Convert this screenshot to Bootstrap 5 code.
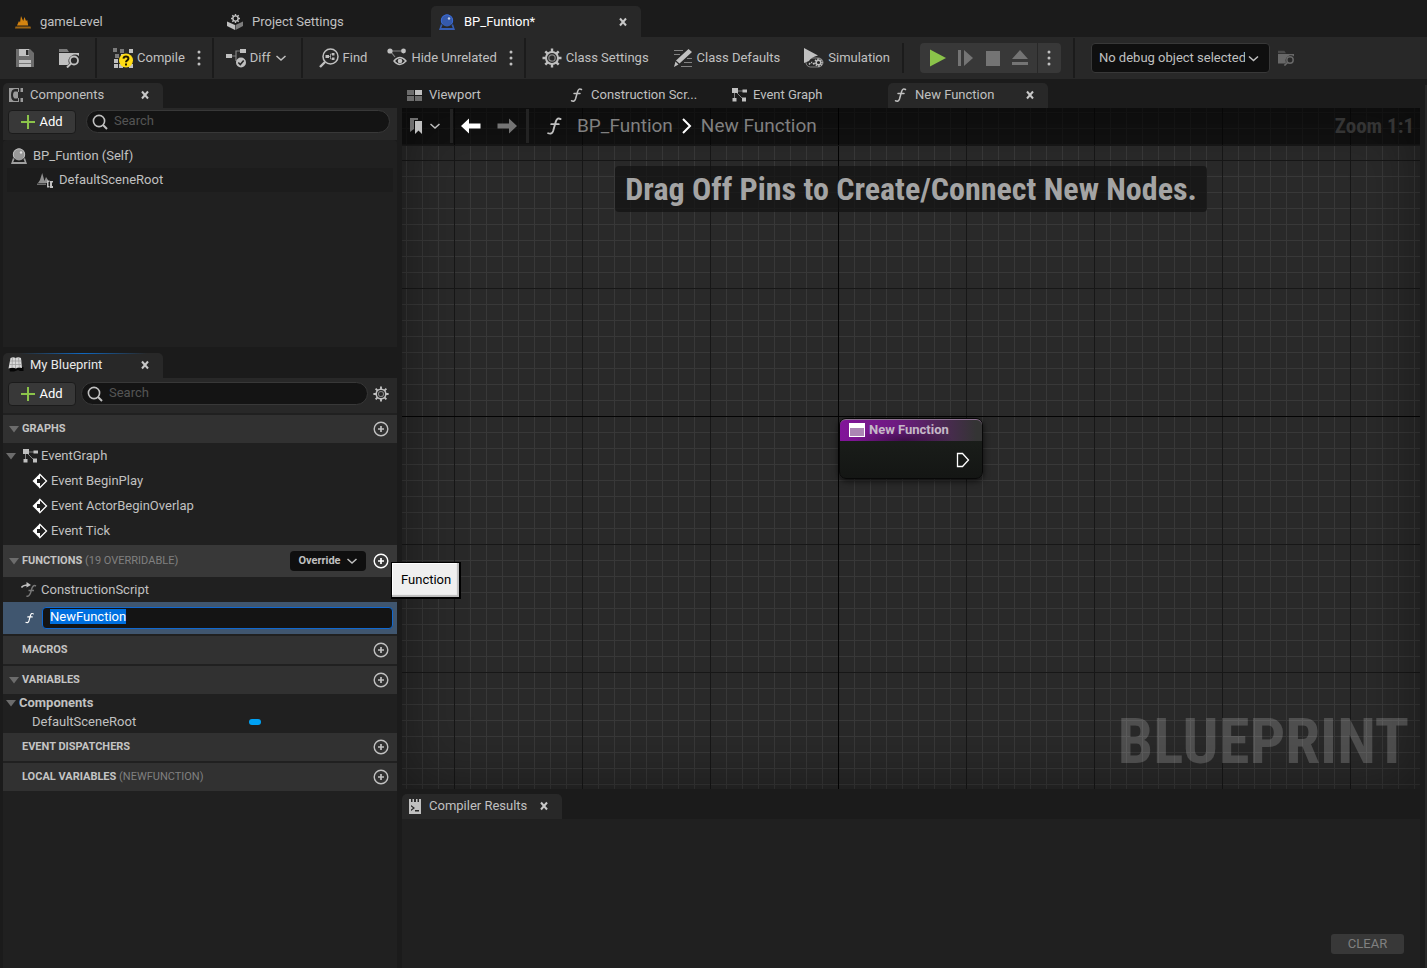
<!DOCTYPE html>
<html lang="en" data-bs-theme="dark">
<head>
<meta charset="utf-8">
<meta name="viewport" content="width=device-width, initial-scale=1">
<title>BP_Funtion - Blueprint Editor</title>
<link href="https://cdn.jsdelivr.net/npm/bootstrap@5.3.0/dist/css/bootstrap.min.css" rel="stylesheet">
<style>
:root{--ed-bg:#1b1b1b;--ed-panel:#202020;--ed-bar:#282828;--ed-head:#313131;--ed-text:#c0c0c0;--ed-field:#141414}
body{font-family:Roboto,"Noto Sans",sans-serif;font-size:13px;line-height:16px;color:var(--ed-text);background:var(--ed-bg)}
button,input,select{font:inherit;color:inherit}
button{background:none;border:0;padding:0}
a{color:inherit;text-decoration:none}
svg{flex:none;display:block;fill:currentColor}
.i20{width:20px;height:20px}.i16{width:16px;height:16px}.i12{width:12px;height:12px}
.ln{fill:none;stroke:currentColor}
.narrow-face{font-family:"Roboto Condensed","Liberation Sans Narrow",Roboto,sans-serif;font-weight:700}

.app-tabs{height:37px;padding-left:7px;gap:2px}
.app-tab{width:210px;height:31px;padding:0 12px 0 8px;gap:9px;border-radius:5px 5px 0 0}
.app-tab.current{background:var(--ed-bar);color:#fff}
.close-x{width:12px;height:12px;color:#c8c8c8}

.tools{height:42px;padding-left:3px;background:var(--ed-bar)}
.tool{padding:0 12px;gap:4px;height:100%}
.tool-tight{padding-left:8px}
.tool-drop{padding-right:10px}
.dots{width:8px;margin:0 5px 0 -2px}
.sep{width:2px;height:40px;margin:0 4px;background:var(--ed-bg)}
.sep-short{height:30px;margin:0 16px 0 0}
.sep-wide{margin:0 16px 0 12px}
.play{height:30px;width:141px;background:#383838;border-radius:4px;padding-left:8px}
.play button{width:28px;height:30px;padding-left:1px}
.play .more{width:24px;height:30px;border-left:1px solid #282828;padding-left:7px;margin-left:auto}
.debug-pick{flex:none;width:179px;height:30px;padding:0 24px 0 7px;font-size:13px;line-height:16px;border:1px solid #383838;border-radius:4px;color:var(--ed-text);background-color:#0f0f0f;background-position:right 10px center;background-size:11px 11px;background-image:url("data:image/svg+xml,%3Csvg xmlns='http://www.w3.org/2000/svg' viewBox='0 0 11 11'%3E%3Cpath d='M1 3.5l4.5 4 4.5-4' fill='none' stroke='%23c0c0c0' stroke-width='1.5'/%3E%3C/svg%3E")}
.dim{color:#686868}

.work{gap:5px;padding:4px 7px 0 3px}
.side{flex:0 0 394px}
.dock-tabs{gap:2px}
.dock-tab{width:160px;height:25px;padding:0 12px 2px 5px;gap:6px;border-radius:5px 5px 0 0}
.dock-tab.current{background:var(--ed-bar)}
.dock-tab.active-dock{margin-top:6px;color:#e8e8e8;background:linear-gradient(90deg,transparent 10%,#1068c0 50%,transparent 90%) top/100% 1px no-repeat,var(--ed-bar)}
.side-bar{height:32px;background:var(--ed-bar);padding:2px 7px 0 5px;gap:10px}
.side-bar.with-gear{height:35px;padding-top:4px;padding-right:8px;gap:5px}
.add-btn{width:68px;height:24px;background:#383838;border:1px solid #1b1b1b;border-radius:4px;color:#fff;gap:4px}
.search{height:23px;border:1px solid #383838;border-radius:12px;background:var(--ed-field);padding:0 5px;gap:6px}
.search input{background:none;border:0;outline:0;padding:0 0 1px;min-width:0}
.search input::placeholder{color:#545454;opacity:1}
.comp-tree{background:var(--ed-panel);height:207px;padding:4px 4px 0;border-radius:4px 4px 0 0}
.comp-tree li{height:24px;gap:6px;padding-left:4px}
.comp-tree .child{background:#1c1c1c;padding-left:30px}

.bp-body{background:var(--ed-panel)}
.sect{height:28px;margin-top:2px;background:var(--ed-head);padding:0 8px 0 5px;font-size:11px;font-weight:700}
.sect h2{font-size:11px;line-height:16px;font-weight:700;margin:0;color:#c4c4c4}
.sect h2 span{font-weight:400;color:#808080}
.sect h2.leafless{padding-left:14px}
.tri{width:12px;height:12px;color:#6c6c6c;margin-right:2px}
.tri-in{margin-left:2px}
.sect-hot{height:32px;background:#383838}
.override{width:76px;height:20px;margin-right:7px;background:#0f0f0f;border-radius:4px;gap:5px}
.tip{left:calc(100% - 6px);top:17px;z-index:5;padding:10px 9px;width:70px;height:37px;line-height:14px;font-weight:400;font-size:13px;color:#000;white-space:nowrap;background:#efefef;border:2px solid #000;border-top-width:1px;border-left-width:1px;box-shadow:inset -2px -2px 1px #bbb,inset 1px 1px 0 #fff}
.bp-list li{height:25px}
.graph-row .i16{margin:0 3px}
.ev{padding-left:29px;gap:3px}
.fn-row{padding-left:18px}
.bp-list .fn-edit{height:32px;background:#40566f;padding:0 4px 0 21px;gap:6px;color:#fff}
.fn-edit input{height:22px;background:#141414;border:1px solid #1068d0;border-radius:4px;padding:0 7px 3px;outline:0;min-width:0}
.fn-edit input::selection{background:#0070e0;color:#fff}
.var-pill{width:12px;height:6px;border-radius:3px;background:#00a2f5;margin-left:113px}
.bp-vars{padding-bottom:2px}
.bp-vars li{height:18px}
.bp-vars .var-row{padding-left:29px;height:19px}

.graph{background-color:#292929;background-image:
 linear-gradient(#030303,#030303),linear-gradient(#030303,#030303),
 linear-gradient(90deg,#171717 1px,transparent 1px),linear-gradient(#171717 1px,transparent 1px),
 linear-gradient(90deg,#383838 1px,transparent 1px),linear-gradient(#383838 1px,transparent 1px);
 background-size:1px 100%,100% 1px,128px 128px,128px 128px,16px 16px,16px 16px;
 background-position:436px 0,0 308px,52px 52px,52px 52px,4px 4px,4px 4px;
 background-repeat:no-repeat,no-repeat,repeat,repeat,repeat,repeat}
.shade{inset:0;box-shadow:inset 0 0 60px rgba(0,0,0,.42);pointer-events:none}
.graph-head{height:38px;background:rgba(0,0,0,.58);border-bottom:1px solid #161616;padding:0 6px 2px 8px}
.graph-head .bar{width:3px;height:34px;margin:0 8px 0 9px;background:#232323}
.crumbs{font-size:19px;line-height:24px;color:#808080;gap:8px}
.zoom-note{font-size:21px;line-height:24px;color:#343434}
.hint{margin-top:20px;height:46px;padding:0 10px;background:rgba(18,18,18,.72);border-radius:4px;color:#a4a4a4;font-size:32px;line-height:46px}
.mark-note{right:11px;bottom:11px;font-size:63px;line-height:72px;color:rgba(255,255,255,.18)}
.fn-node{left:437px;top:310px;width:144px;height:61px;border:1px solid #080808;border-radius:7px;background:linear-gradient(#1d211d,#141614);box-shadow:0 2px 6px rgba(0,0,0,.7)}
.fn-node header{height:22px;border-radius:6px 6px 0 0;gap:4px;padding:0 0 1px 9px;font-weight:700;color:#c4b8c6;border-top:1px solid #8c7090;background:radial-gradient(ellipse at 45% 100%,rgba(20,0,25,.5),transparent 45%),linear-gradient(90deg,#82149a,#6d1b80 40%,#343434 96%)}
.fn-node .pin{margin:11px 12px 0 auto;color:#fff}
.results-tab{margin-top:5px}
.results{height:149px;background:var(--ed-panel);padding:0 16px 14px 0}
.clear-btn{width:73px;height:20px;border-radius:3px;background:#383838;color:#808080}
.edge{right:0;top:85px;bottom:0;width:2px;background:#282828}
</style>
</head>
<body>
<svg class="d-none" aria-hidden="true">
 <symbol id="x" viewBox="0 0 12 12"><path class="ln" stroke-width="2" d="M3 2.500l6 7M9 2.500l-6 7"/></symbol>
 <symbol id="chev" viewBox="0 0 12 12"><path class="ln" stroke-width="1.500" d="M1.500 4L6 8l4.500-4"/></symbol>
 <symbol id="dots" viewBox="0 0 8 20"><circle cx="4" cy="4" r="1.500"/><circle cx="4" cy="10" r="1.500"/><circle cx="4" cy="16" r="1.500"/></symbol>
 <symbol id="level" viewBox="0 0 16 16"><path d="M2 11.500L4 7l1 1.500L6 2l2.200 5 1.300-4 1.500 4 1.200-1 1 5.500z"/><path d="M.5 12.500h15l.5 2H0z" opacity=".7"/></symbol>
 <symbol id="actor" viewBox="0 0 16 16"><path d="M2 10l-2 6h16l-2-6-1.500 1 1.200 3H2.300l1.200-3z" opacity=".8"/><circle cx="8" cy="6.500" r="6" opacity=".75"/><path class="ln" stroke-width="1" d="M3.500 10a5.700 5.700 0 1 1 9 0"/><circle cx="10" cy="4.500" r="1.200" fill="#fff" opacity=".7"/></symbol>
 <symbol id="settingsbox" viewBox="0 0 16 16"><path d="M0 7.500L8 11v5l-8-4z"/><path d="M16 7.500L8.500 11v5L16 12z" opacity=".6"/><circle class="ln" cx="8.500" cy="4.500" r="2.600" stroke-width="1.400"/><path class="ln" stroke-width="1.400" d="M8.500 0v2M8.500 7v2M4 4.500h2M11 4.500h2M5.300 1.300l1.300 1.300M11.700 1.300l-1.300 1.300M5.300 7.700l1.300-1.300M11.700 7.700l-1.300-1.300"/></symbol>
 <symbol id="save" viewBox="0 0 20 20"><path d="M1 1h14l4 4v14H1z" opacity=".45"/><path d="M4 1h10v7H4zM4 12h12v7H4z"/><path d="M11 2h2.500v5H11z" fill="#282828"/><path d="M4 15.500h12" stroke="#777" stroke-width="1"/></symbol>
 <symbol id="browse" viewBox="0 0 20 20"><path d="M0 1h8l2 3H0z" opacity=".55"/><path d="M0 5h20v3a6.500 6.500 0 0 0-10 7.500L8.500 17H0z"/><circle class="ln" cx="15" cy="12.500" r="4" stroke-width="1.800"/><path class="ln" stroke-width="2" d="M12 15.500l-4 4"/></symbol>
 <symbol id="compile" viewBox="0 0 20 20"><path opacity=".55" d="M0 0h4v4H0zM7 1h4v4H7zM2 6h4v4H2z"/><path d="M16 1h4v4h-4zM1 11h4v4H1zM1 16h4v4H1zM8 6h4v4H8zM16 16h4v4h-4zM6 16h4v4H6z"/><circle cx="13" cy="12.500" r="7" fill="#ffdc14"/><path fill="none" stroke="#201800" stroke-width="2" d="M10.500 10.700q.2-2.200 2.500-2.200 2.400 0 2.400 2 0 1-1.200 1.800-1.200.7-1.200 2M13 15.500v2"/></symbol>
 <symbol id="diff" viewBox="0 0 20 20"><path class="ln" stroke-width="1.200" opacity=".6" d="M5 8h5M10 13V3h5"/><path d="M0 6h6v4H0zM14 1h6v4h-6z"/><circle cx="15" cy="14.500" r="5"/><path fill="none" stroke="#282828" stroke-width="1.600" d="M12.300 14.500l2 2 3.400-4"/></symbol>
 <symbol id="find" viewBox="0 0 20 20"><circle class="ln" cx="11.500" cy="8.500" r="7.500" stroke-width="1.500"/><path class="ln" stroke-width="2.400" d="M6 14l-5 5"/><path d="M6.500 7h3.500v3H6.500zM13 5h2.500v2.500H13zM13 9.500h2.500V12H13z"/><path class="ln" opacity=".7" d="M10 8.500h1.500M13 6h-1.500v5H13"/></symbol>
 <symbol id="hide" viewBox="0 0 20 20"><path class="ln" stroke-width="1.200" opacity=".6" d="M4 3h12M4 4l4 5"/><circle cx="3" cy="3" r="2.600"/><circle cx="16.500" cy="3" r="2.400"/><path class="ln" stroke-width="1.400" d="M7 13q5.800-7 12 0-6.200 7-12 0z"/><circle cx="13" cy="13" r="2.300"/></symbol>
 <symbol id="gear" viewBox="0 0 20 20"><circle class="ln" cx="10" cy="10" r="6" stroke-width="2"/><circle class="ln" cx="10" cy="10" r="3.200" stroke-width="1.300" opacity=".6"/><path class="ln" stroke-width="2.400" d="M10 .5V4M10 16v3.500M.5 10H4M16 10h3.500M3.300 3.300l2.400 2.400M14.300 14.300l2.400 2.400M3.300 16.700l2.400-2.400M14.300 5.700l2.400-2.400"/></symbol>
 <symbol id="defaults" viewBox="0 0 20 20"><path d="M15.500 1L19 4 6.500 15.500 3 12.500zM2.500 13.500L5.500 16.500 1 19z"/><path class="ln" opacity=".6" d="M1 2.500h9M1 6.500h6M14 10.500h5M11 14.500h8M8 18.500h11"/></symbol>
 <symbol id="simul" viewBox="0 0 20 20"><path d="M0 0l14 7.500Q7 9 5 13L0 15z"/><rect class="ln" x="2" y="10" width="17" height="9" rx="4.500" opacity=".6"/><circle class="ln" cx="14.500" cy="14.500" r="2.300" stroke-width="1.400"/><path class="ln" stroke-width="1.500" stroke-dasharray="1.500 1" d="M14.500 11a3.500 3.500 0 1 0 .1 0M5 16.500q3-4 5 0"/></symbol>
 <symbol id="f" viewBox="0 0 16 16"><path class="ln" stroke-width="1.500" stroke-linecap="round" d="M12.500 2.500q-2.600-1.600-3.800 1.800L6.500 12q-1 3-4 1.800M5 6.500h6"/></symbol>
 <symbol id="fover" viewBox="0 0 16 16"><path class="ln" stroke-width="1.600" d="M.5 5.500Q2 3 7 3"/><path d="M5.500 0L10 3 5.500 5.500z"/><path class="ln" stroke-width="1.500" opacity=".55" d="M15 4q-2.500-1.500-4 2l-1.500 5Q8 15 5.500 14M7.500 8.500H13"/></symbol>
 <symbol id="nodes" viewBox="0 0 16 16"><path class="ln" opacity=".6" d="M5 4h7M3.500 5v8M5 5l7 7"/><path d="M1 1h6v5H1zM11.500 2.500H16v3h-4.500zM1.500 11h4v3.500h-4zM11 10.500h4v4h-4z"/></symbol>
 <symbol id="views" viewBox="0 0 16 16"><path opacity=".5" d="M0 3h7v5H0zM0 9h7v5H0zM8 9h7v5H8z"/><path d="M8 3h7v5H8z"/></symbol>
 <symbol id="comp" viewBox="0 0 16 16"><path fill-rule="evenodd" opacity=".75" d="M1 1h14v4h-2.500v6H15v4H1zM11 1v4H9.500V4.500H6.500Q5 5 5 8t1.500 3.500h3V11H11v4h1.500V1zM3 8q0 6 4 6h3V2H7Q3 2 3 8z"/></symbol>
 <symbol id="root" viewBox="0 0 16 16"><path opacity=".7" d="M1 11L3 8l2.200-7L7.500 9 9 5l2 3v3z"/><path d="M0 11.500h9V13H0z" opacity=".5"/><path d="M10 8.500h2.500V10h-1v4h1v1.500H10zM13 9h3v1.500h-1V14h1v2h-3z"/></symbol>
 <symbol id="lens" viewBox="0 0 16 16"><circle class="ln" cx="7" cy="7" r="5.600" stroke-width="1.600"/><path class="ln" stroke-width="1.900" d="M11 11l4 4"/></symbol>
 <symbol id="plus" viewBox="0 0 14 14"><path fill="none" stroke="#8bc34a" stroke-width="2" d="M7 0v14M0 7h14"/></symbol>
 <symbol id="addc" viewBox="0 0 16 16"><circle class="ln" cx="8" cy="8" r="6.800" stroke-width="1.400"/><path class="ln" stroke-width="1.700" d="M8 5v6M5 8h6"/></symbol>
 <symbol id="tri" viewBox="0 0 12 12"><path d="M1 3h10L6 9.500z"/></symbol>
 <symbol id="book" viewBox="0 0 16 16"><path fill="#050505" d="M1 10h14.500v4H12l-2-1-4 1.500H2z"/><path fill="#d8d8d8" d="M2.500 1q3-1.500 5 0 2.500-1.500 5.500 0l1 10q-3.500-1-6 .5-3-1.500-7.500 0z"/><path fill="none" stroke="#999" stroke-width=".7" d="M7.500 1v10M4.500.5L4 10.500M10.500.5l.8 10M2 4h11.500M1.500 7.500h12"/></symbol>
 <symbol id="event" viewBox="0 0 16 16"><path fill="#fff" d="M8 .5v15L.5 8z"/><path fill="none" stroke="#fff" stroke-width="1.300" d="M7.500 1L14.500 8l-7 7"/><path fill="#202020" d="M5 6h3.500V3.500L12.500 8l-4 4.500V10H5z"/></symbol>
 <symbol id="log" viewBox="0 0 16 16"><path fill-rule="evenodd" d="M2 4h12v12H2zM4 7v1.500L6 10l-2 1.500V13l4-3zM8 12v1.500h4V12z"/><path d="M2 1h2v3H2zM5.500 1h1.500v3H5.500zM9 1h1.500v3H9zM12 1h2v3h-2z"/></symbol>
 <symbol id="mark" viewBox="0 0 16 16"><path opacity=".55" d="M0 0h8v2H4v9l-4 3z"/><path d="M5 3h7v13L8.500 12.500 5 16z"/></symbol>
 <symbol id="arrow" viewBox="0 0 20 16"><path d="M0 8l8-7.500V5.500h11.500v5H8v5z"/></symbol>
</svg>

<div class="vh-100 d-flex flex-column position-relative overflow-hidden">
 <nav class="app-tabs d-flex align-items-end" aria-label="Open assets">
  <a href="#" class="app-tab d-flex align-items-center"><svg class="i16" style="color:#d58410"><use href="#level"/></svg>gameLevel</a>
  <a href="#" class="app-tab d-flex align-items-center"><svg class="i16"><use href="#settingsbox"/></svg>Project Settings</a>
  <div class="app-tab current d-flex align-items-center"><svg class="i16" style="color:#3a6bd8"><use href="#actor"/></svg><a href="#">BP_Funtion*</a><button class="ms-auto" aria-label="Close BP_Funtion"><svg class="close-x"><use href="#x"/></svg></button></div>
 </nav>

 <div class="tools d-flex align-items-center" role="toolbar" aria-label="Blueprint toolbar">
  <button class="tool" aria-label="Save"><svg class="i20"><use href="#save"/></svg></button>
  <button class="tool" aria-label="Browse"><svg class="i20"><use href="#browse"/></svg></button>
  <div class="sep"></div>
  <button class="tool d-flex align-items-center"><svg class="i20"><use href="#compile"/></svg>Compile</button>
  <button class="dots" aria-label="Compile options"><svg width="8" height="20"><use href="#dots"/></svg></button>
  <div class="sep"></div>
  <button class="tool tool-tight tool-drop d-flex align-items-center"><svg class="i20"><use href="#diff"/></svg>Diff<svg class="i12"><use href="#chev"/></svg></button>
  <div class="sep"></div>
  <button class="tool d-flex align-items-center"><svg class="i20"><use href="#find"/></svg>Find</button>
  <button class="tool tool-tight d-flex align-items-center"><svg class="i20"><use href="#hide"/></svg>Hide Unrelated</button>
  <button class="dots" aria-label="Hide options"><svg width="8" height="20"><use href="#dots"/></svg></button>
  <div class="sep"></div>
  <button class="tool d-flex align-items-center"><svg class="i20"><use href="#gear"/></svg>Class Settings</button>
  <button class="tool d-flex align-items-center"><svg class="i20"><use href="#defaults"/></svg>Class Defaults</button>
  <button class="tool d-flex align-items-center"><svg class="i20"><use href="#simul"/></svg>Simulation</button>
  <div class="sep sep-short"></div>
  <div class="play d-flex align-items-center">
   <button aria-label="Play"><svg class="i20"><path fill="#8bc34a" d="M1 1.500L17 10 1 18.500z"/></svg></button>
   <button aria-label="Step"><svg class="i20"><path fill="#747474" d="M2 2h3v16H2zM8 2l9 8-9 8z"/></svg></button>
   <button aria-label="Stop"><svg class="i20"><path fill="#747474" d="M2 3h14v15H2z"/></svg></button>
   <button aria-label="Eject"><svg class="i20"><path fill="#747474" d="M9 2l8 9H1zM1 14h16v3H1z"/></svg></button>
   <button class="more" aria-label="Play options"><svg width="8" height="20"><use href="#dots"/></svg></button>
  </div>
  <div class="sep sep-wide"></div>
  <select class="debug-pick form-select me-2" aria-label="Debug object"><option>No debug object selected</option></select>
  <button class="dim" aria-label="Find debug object"><svg class="i16"><use href="#browse"/></svg></button>
 </div>

 <div class="work d-flex flex-grow-1">
  <aside class="side d-flex flex-column">
   <div class="dock-tab current d-flex align-items-center"><svg class="i16"><use href="#comp"/></svg>Components<button class="ms-auto" aria-label="Close Components"><svg class="close-x"><use href="#x"/></svg></button></div>
   <div class="side-bar d-flex">
    <button class="add-btn d-flex align-items-center justify-content-center"><svg width="14" height="14"><use href="#plus"/></svg>Add</button>
    <label class="search d-flex align-items-center flex-grow-1"><svg class="i16"><use href="#lens"/></svg><input type="text" class="flex-grow-1" placeholder="Search" aria-label="Search components"></label>
   </div>
   <ul class="comp-tree list-unstyled mb-0">
    <li class="d-flex align-items-center"><svg class="i16"><use href="#actor"/></svg>BP_Funtion (Self)</li>
    <li class="child d-flex align-items-center"><svg class="i16"><use href="#root"/></svg>DefaultSceneRoot</li>
   </ul>

   <div class="dock-tab active-dock d-flex align-items-center"><svg class="i16"><use href="#book"/></svg>My Blueprint<button class="ms-auto" aria-label="Close My Blueprint"><svg class="close-x"><use href="#x"/></svg></button></div>
   <div class="side-bar with-gear d-flex">
    <button class="add-btn d-flex align-items-center justify-content-center"><svg width="14" height="14"><use href="#plus"/></svg>Add</button>
    <label class="search d-flex align-items-center flex-grow-1"><svg class="i16"><use href="#lens"/></svg><input type="text" class="flex-grow-1" placeholder="Search" aria-label="Search blueprint"></label>
    <button class="d-flex pt-1" aria-label="View options"><svg class="i16"><use href="#gear"/></svg></button>
   </div>
   <div class="bp-body flex-grow-1">
    <div class="sect d-flex align-items-center"><svg class="tri"><use href="#tri"/></svg><h2>GRAPHS</h2><button class="ms-auto" aria-label="Add graph"><svg class="i16"><use href="#addc"/></svg></button></div>
    <ul class="bp-list list-unstyled mb-0">
     <li class="graph-row d-flex align-items-center"><svg class="tri tri-in"><use href="#tri"/></svg><svg class="i16"><use href="#nodes"/></svg>EventGraph</li>
     <li class="ev d-flex align-items-center"><svg class="i16"><use href="#event"/></svg>Event BeginPlay</li>
     <li class="ev d-flex align-items-center"><svg class="i16"><use href="#event"/></svg>Event ActorBeginOverlap</li>
     <li class="ev d-flex align-items-center"><svg class="i16"><use href="#event"/></svg>Event Tick</li>
    </ul>
    <div class="sect sect-hot d-flex align-items-center position-relative"><svg class="tri"><use href="#tri"/></svg><h2>FUNCTIONS <span>(19 OVERRIDABLE)</span></h2>
     <button class="override ms-auto d-flex align-items-center justify-content-center">Override<svg class="i12"><use href="#chev"/></svg></button>
     <button class="text-white" aria-label="Add function"><svg class="i16"><use href="#addc"/></svg></button>
     <div class="tip position-absolute" role="tooltip">Function</div>
    </div>
    <ul class="bp-list list-unstyled mb-0">
     <li class="fn-row d-flex align-items-center gap-1"><svg class="i16"><use href="#fover"/></svg>ConstructionScript</li>
     <li class="fn-edit d-flex align-items-center"><svg class="i12"><use href="#f"/></svg><input id="fnName" type="text" class="flex-grow-1" value="NewFunction" aria-label="Function name"></li>
    </ul>
    <div class="sect d-flex align-items-center"><h2 class="leafless">MACROS</h2><button class="ms-auto" aria-label="Add macro"><svg class="i16"><use href="#addc"/></svg></button></div>
    <div class="sect d-flex align-items-center"><svg class="tri"><use href="#tri"/></svg><h2>VARIABLES</h2><button class="ms-auto" aria-label="Add variable"><svg class="i16"><use href="#addc"/></svg></button></div>
    <ul class="bp-vars list-unstyled mb-0">
     <li class="d-flex align-items-center fw-bold"><svg class="tri tri-in"><use href="#tri"/></svg>Components</li>
     <li class="var-row d-flex align-items-center">DefaultSceneRoot<span class="var-pill"></span></li>
    </ul>
    <div class="sect mt-0 d-flex align-items-center"><h2 class="leafless">EVENT DISPATCHERS</h2><button class="ms-auto" aria-label="Add event dispatcher"><svg class="i16"><use href="#addc"/></svg></button></div>
    <div class="sect d-flex align-items-center"><h2 class="leafless">LOCAL VARIABLES <span>(NEWFUNCTION)</span></h2><button class="ms-auto" aria-label="Add local variable"><svg class="i16"><use href="#addc"/></svg></button></div>
   </div>
  </aside>

  <main class="d-flex flex-column flex-grow-1">
   <nav class="dock-tabs d-flex" aria-label="Graph tabs">
    <a href="#" class="dock-tab d-flex align-items-center"><svg class="i16"><use href="#views"/></svg>Viewport</a>
    <a href="#" class="dock-tab d-flex align-items-center"><svg class="i16"><use href="#f"/></svg>Construction Scr...</a>
    <a href="#" class="dock-tab d-flex align-items-center"><svg class="i16"><use href="#nodes"/></svg>Event Graph</a>
    <div class="dock-tab current d-flex align-items-center"><svg class="i16"><use href="#f"/></svg><a href="#">New Function</a><button class="ms-auto" aria-label="Close New Function"><svg class="close-x"><use href="#x"/></svg></button></div>
   </nav>
   <section class="graph flex-grow-1 position-relative overflow-hidden">
    <div class="shade position-absolute"></div>
    <div class="graph-head d-flex align-items-center position-relative">
     <button class="d-flex align-items-center gap-1" aria-label="Bookmarks"><svg width="15" height="16"><use href="#mark" width="16" height="16"/></svg><svg class="i12"><use href="#chev"/></svg></button>
     <div class="bar"></div>
     <button class="text-white" aria-label="Back"><svg width="20" height="16"><use href="#arrow"/></svg></button>
     <button class="ms-3" aria-label="Forward" style="color:#747474"><svg width="20" height="16" viewBox="0 0 20 16"><path d="M20 8l-8-7.500V5.500H.5v5H12v5z"/></svg></button>
     <div class="bar me-3"></div>
     <svg class="i20"><use href="#f"/></svg>
     <div class="crumbs d-flex align-items-center ms-2 ps-1"><a href="#">BP_Funtion</a><svg width="12" height="16" class="text-white"><path class="ln" stroke-width="2" d="M2 1l7 7-7 7"/></svg><span>New Function</span></div>
     <div class="zoom-note narrow-face ms-auto">Zoom 1:1</div>
    </div>
    <div class="d-flex justify-content-center"><div class="hint narrow-face position-relative text-nowrap">Drag Off Pins to Create/Connect New Nodes.</div></div>
    <div class="mark-note narrow-face position-absolute">BLUEPRINT</div>
    <article class="fn-node position-absolute d-flex flex-column">
     <header class="d-flex align-items-center"><svg width="16" height="14"><path fill="#fff" d="M0 0h16v14H0z"/><path fill="#ab86b4" d="M1 5h14v8H1z"/></svg>New Function</header>
     <svg class="pin" width="14" height="16"><path class="ln" stroke-width="1.300" d="M1.500 1.500h5L12.500 8l-6 6.500h-5z"/></svg>
    </article>
   </section>
   <div class="dock-tab results-tab current d-flex align-items-center"><svg class="i16"><use href="#log"/></svg>Compiler Results<button class="ms-auto" aria-label="Close Compiler Results"><svg class="close-x"><use href="#x"/></svg></button></div>
   <section class="results d-flex align-items-end justify-content-end"><button class="clear-btn">CLEAR</button></section>
  </main>
 </div>
 <div class="edge position-absolute"></div>
</div>
<script src="https://cdn.jsdelivr.net/npm/bootstrap@5.3.0/dist/js/bootstrap.bundle.min.js"></script>
<script>
 const fnName = document.getElementById('fnName');
 fnName.focus();
 fnName.select();
</script>
</body>
</html>
